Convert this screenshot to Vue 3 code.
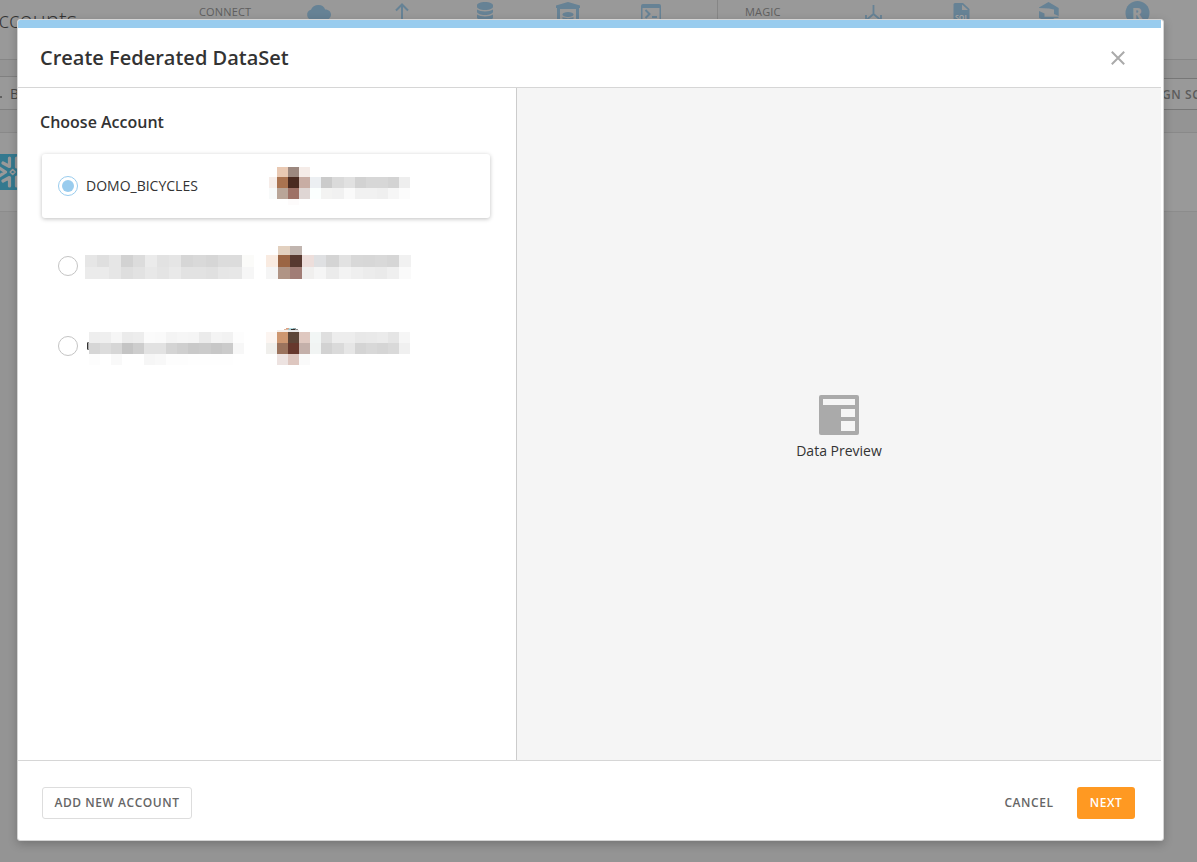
<script setup>
import { ref } from 'vue'

const wideCols = [277, 288, 299, 310, 321, 332, 344, 355, 366, 377, 388, 399, 410]

// Each band: top, bottom, column edges, one colour per column.
const accounts = [
  {
    id: 0,
    name: 'DOMO_BICYCLES',
    top: 154,
    nameBands: [],
    ownerBands: [
      [167, 177, [277, 288, 299, 310], 'e9c9b3 9c887f f5ece8'],
      [177, 188, [269, ...wideCols], 'f6ede9 aa7350 4a2a20 c8ada4 eceff2 cbcbcb dadada e1e1e1 d2d2d2 d7d7d7 d7d7d7 d3d3d3 eeeeee'],
      [188, 199, [269, ...wideCols], 'f8fafa b9a598 9e7166 dfd6d4 fbfffe f3f3f2 f1f1f1 fafafa f1f1f1 f1f1f1 efefef f6f6f6 fcfcfc'],
      [199, 205, [288, 299], 'fdfbfb'],
    ],
  },
  {
    id: 1,
    name: '',
    top: 234,
    nameBands: [
      [255, 267, [85, 97, 109, 121, 133, 145, 157, 169, 181, 193, 206, 218, 229, 242, 254], 'e6e6e6 dfdfdf e6e6e6 d2d2d2 dcdcdc ebebeb e2e2e2 e5e5e5 d6d6d6 d9d9d9 d6d6d6 dcdcdc dcdcdc fbfbf9'],
      [267, 279, [85, 97, 109, 121, 133, 145, 157, 169, 181, 193, 206, 218, 229, 242, 254], 'ebebeb ebebeb e6e6e6 dedede e2e2e2 e8e8e8 e4e4e4 e9e9e9 e2e2e2 e2e2e2 e0e0e0 e6e6e6 e7e7e7 f6f6f6'],
    ],
    ownerBands: [
      [246, 255, [278, 290, 302], 'e2d0bf c1b5af'],
      [255, 267, [266, 278, 290, 302, 314, 326, 339, 351, 363, 375, 387, 399, 411], 'f9ebe1 9b6544 573930 eddedb dfe0e2 d4d4d4 e2e2e2 d8d8d8 d7d7d7 d9d9d9 d6d6d6 f1f1f1'],
      [267, 279, [266, 278, 290, 302, 314, 326, 339, 351, 363, 375, 387, 399, 411], 'f5f5f5 b09485 a17d76 f0efee f5f5f5 ebebeb f3f3f3 efefef ececec eaeaea efefef fafafa'],
    ],
  },
  {
    id: 2,
    name: '',
    top: 314,
    nameBands: [
      [342, 343, [87, 89], '8a8a8a'],
      [343, 349, [87, 88, 89], '333333 a8a8a8'],
      [349, 350, [87, 89], '8a8a8a'],
      [332, 343, [89, 100, 111, 122, 133, 144, 155, 166, 177, 188, 199, 211, 222, 233, 244], 'eeeeee efefef f6f6f6 ebebeb ededed fbfbfb fafafa f4f4f4 f6f6f6 f5f5f5 ebebeb f4f4f4 f2f2f2 fdfdfd'],
      [343, 354, [89, 100, 111, 122, 133, 144, 155, 166, 177, 188, 199, 211, 222, 233, 244], 'd6d6d6 dcdcdc d6d6d6 c4c4c4 cdcdcd e2e2e2 e2e2e2 d4d4d4 cfcfcf c9c9c9 cbcbcb c7c7c7 cbcbcb f7f7f7'],
      [354, 365, [89, 100, 111, 122, 144, 155, 166, 188, 233], 'fdfdfd ffffff f9f9f9 ffffff f6f6f6 f8f8f8 fdfdfd fefefe'],
    ],
    ownerBands: [
      [328, 329, [286, 289, 293, 296], 'd9a184 b5dce3 8fa6a8'],
      [329, 330, [284, 288, 291, 295, 298], 'e0b59d 9ec9d0 34302e 8e8f8e'],
      [330, 332, [277, 288, 299], 'f5efec e9e7e7'],
      [332, 343, [266, ...wideCols], 'fcf5f1 ce9771 5d4538 dfc8c0 f2f6f5 dfdfdf ededed ededed e8e8e8 e9e9e9 ebebeb e5e5e5 f6f6f6'],
      [343, 354, [266, ...wideCols], 'f0efec 9b735d 67382d c4b0aa f1f4f3 d2d2d2 dadada e6e6e6 d4d4d4 d8d8d8 d5d5d5 d9d9d9 f0f0f0'],
      [354, 365, [277, 288, 299, 310], 'ede3e1 dec7c0 fafafa'],
    ],
  },
]

const cells = (bands) =>
  bands.flatMap(([y, bottom, xs, colours]) =>
    colours.split(' ').map((c, i) => ({ x: xs[i], y, w: xs[i + 1] - xs[i], h: bottom - y, fill: '#' + c }))
  )

const rows = accounts.map((a) => ({ ...a, nameCells: cells(a.nameBands), ownerCells: cells(a.ownerBands) }))
const selected = ref(0)
</script>

<template>
  <div class="screen">
    <div class="page">
      <header class="topbar">
        <h1>Accounts</h1>
        <span class="group">CONNECT</span>
        <div class="icons connect">
          <svg viewBox="0 0 28 28"><path d="M7 20a5.2 5.2 0 0 1-1-10.200C7 6.500 10 5 13.500 5c3.500 0 6 2 6.600 4.500C24 9.500 26 12 26 14.500S24 20 20 20z" /></svg>
          <svg viewBox="0 0 28 28"><path class="line" d="M14 22V5M8 10.500l6-6 6 6" /></svg>
          <svg viewBox="0 0 28 28"><path d="M6 5.200C6 3.400 9.600 2 14 2s8 1.400 8 3.200v1.500C22 8.500 18.400 10 14 10S6 8.500 6 6.700zM6 9.500c3.500 2.500 12.500 2.500 16 0v2.300C22 13.700 18.400 15 14 15s-8-1.300-8-3.200zM6 14.500c3.500 2.500 12.500 2.500 16 0v3c0 4-16 4-16 0z" /></svg>
          <svg viewBox="0 0 28 28"><path d="M2 5.500 14 2l12 3.500V8h-1v14h-3V9H6v13H3V8H2z" /><ellipse cx="14" cy="14.500" rx="5.500" ry="2.500" /><path d="M8.500 17c3 1.500 8 1.500 11 0V22h-11z" /></svg>
          <svg viewBox="0 0 28 28"><path fill-rule="evenodd" d="M6 4h16a2 2 0 0 1 2 2v16H4V6a2 2 0 0 1 2-2zm-.500 4v14h17V8z" /><path class="line" d="m8.500 10 4 4-4 4M15 17h5" /></svg>
        </div>
        <span class="divider"></span>
        <span class="group">MAGIC</span>
        <div class="icons magic">
          <svg viewBox="0 0 28 28"><path class="line thin" d="M14.500 5v9L8 19.500M14.500 14l6.500 5.500M7 15v5M22 15v5" /></svg>
          <svg viewBox="0 0 28 28"><path fill-rule="evenodd" d="M8 3h8l6.500 6v13H6.500V4.500A1.500 1.500 0 0 1 8 3zm7 1.500V10h6z" /><text x="8" y="20" class="sql">SQL</text></svg>
          <svg viewBox="0 0 28 28"><path d="M4 7.500 13.500 2l10.200 6v8L19 14V9.500L14 8.500 4 8zM4 11l5.500 2.500v3.200h14V18h-4l-5.500 4L4 18z" /></svg>
          <svg viewBox="0 0 28 28"><circle cx="14.500" cy="13" r="12" /><text x="9" y="18.500" class="r">R</text></svg>
        </div>
      </header>
      <div class="toolbar">
        <div class="field"><i></i><span>B</span></div>
        <div class="scope">GN SC</div>
      </div>
      <div class="listing">
        <svg class="flake" viewBox="0 0 36 36"><rect width="36" height="36" /><path d="M4 13l7.500 5L4 23M15.500 4v8.500L9 9M15.500 32v-8.500L9 27M22.500 4v9M22.500 32v-9" /><path d="m18.700 15.500 2.500 2.500-2.500 2.500-2.500-2.500z" class="core" /></svg>
      </div>
    </div>

    <section class="modal">
      <div class="accent"></div>
      <div class="head">
        <h2>Create Federated DataSet</h2>
        <svg class="close" viewBox="0 0 14 14"><path d="m.8.800 12.400 12.400M13.200.800.800 13.200" /></svg>
      </div>
      <div class="body">
        <div class="choose">
          <h3>Choose Account</h3>
          <div class="rows">
            <div v-for="row in rows" :key="row.id" class="row" :class="{ active: selected === row.id }" @click="selected = row.id">
              <span class="radio"></span>
              <span v-if="row.name" class="name">{{ row.name }}</span>
              <svg v-else class="mosaic" width="181" height="64" :viewBox="`85 ${row.top} 181 64`" shape-rendering="crispEdges">
                <rect v-for="(c, i) in row.nameCells" :key="i" :x="c.x" :y="c.y" :width="c.w" :height="c.h" :fill="c.fill" />
              </svg>
              <svg class="mosaic" width="160" height="64" :viewBox="`266 ${row.top} 160 64`" shape-rendering="crispEdges">
                <rect v-for="(c, i) in row.ownerCells" :key="i" :x="c.x" :y="c.y" :width="c.w" :height="c.h" :fill="c.fill" />
              </svg>
            </div>
          </div>
        </div>
        <div class="preview">
          <svg width="40" height="40" viewBox="0 0 40 40"><rect width="40" height="40" rx="2" fill="#aaa" /><path fill="#f5f5f5" d="M4 4h32v6H4zM22 14h14v8H22zM22 26h14v10H22z" /></svg>
          <p>Data Preview</p>
        </div>
      </div>
      <footer class="foot">
        <button class="add">ADD NEW ACCOUNT</button>
        <button class="cancel">CANCEL</button>
        <button class="next">NEXT</button>
      </footer>
    </section>
  </div>
</template>

<style>
body { background: #949494; overflow: hidden; }
</style>

<style scoped>
* { box-sizing: border-box; }
.screen {
  position: relative;
  width: 1197px;
  height: 862px;
  overflow: hidden;
  font-family: "Open Sans", "Noto Sans", sans-serif;
  color: #333;
}
.page { position: absolute; inset: 0; background: #949494; }
.topbar {
  display: grid;
  grid-template-columns: 199px 106px 412px 28px 114px 1fr;
  height: 60px;
  background: #999;
  border-bottom: 1px solid #868686;
}
h1 { margin: 3px 0 0 -15px; font-size: 22px; line-height: 32px; font-weight: 300; letter-spacing: 0.2px; color: #333; }
.group { font-size: 11px; line-height: 24px; font-weight: 500; letter-spacing: 0.15px; color: #5e5e5e; }
.icons { display: flex; height: 28px; }
.icons svg { flex: none; width: 28px; height: 28px; fill: #668295; }
.connect { gap: 55px; }
.magic { gap: 60px; }
.icons .line { fill: none; stroke: #668295; stroke-width: 2; }
.icons .thin { stroke-width: 1.8; }
.icons .sql { font: 700 7px "Open Sans", sans-serif; fill: #a4a4a4; }
.icons .r { font: 800 15px "Open Sans", sans-serif; fill: #999; }
.divider { width: 1px; height: 59px; background: #868686; }
.toolbar { display: flex; justify-content: space-between; height: 73px; border-bottom: 1px solid #898989; }
.field {
  display: flex;
  align-items: center;
  width: 180px;
  height: 34px;
  margin-top: 16px;
  background: #999;
  border: 1px solid #808080;
  border-left: 0;
  font-size: 14px;
  color: #484848;
}
.field i { width: 2px; height: 2px; margin: 7px 8px 0 0; background: #606060; }
.scope {
  width: 35px;
  height: 32px;
  margin-top: 18px;
  background: #999;
  border: 1px solid #777;
  border-width: 1px 0;
  font-size: 12px;
  font-weight: 600;
  line-height: 31px;
  letter-spacing: 0.6px;
  white-space: nowrap;
  color: #5c5c5c;
}
.listing { height: 79px; padding-top: 21px; background: #999; border-bottom: 1px solid #8c8c8c; }
.flake { display: block; width: 36px; height: 36px; margin-left: -6px; }
.flake rect { fill: #34798f; }
.flake path { fill: none; stroke: #999; stroke-width: 3.2; stroke-linecap: round; stroke-linejoin: round; }
.flake .core { stroke-width: 1.6; }

.modal {
  position: absolute;
  left: 17px;
  top: 19px;
  width: 1147px;
  height: 822px;
  display: flex;
  flex-direction: column;
  padding-right: 2px;
  background: #fff;
  border: 1px solid #d4d4d4;
  border-radius: 3px;
  box-shadow: 0 3px 10px rgba(0, 0, 0, 0.22);
}
.accent { flex: none; height: 8px; background: #99ccee; border-radius: 2px 0 0 0; }
.head {
  display: flex;
  flex: none;
  align-items: center;
  justify-content: space-between;
  height: 60px;
  padding: 0 36.5px 0 22px;
  border-bottom: 1px solid #d6d6d6;
}
h2 { margin: 0; font-size: 20px; line-height: 28px; font-weight: 600; }
.close { width: 14px; height: 14px; margin-top: 1px; fill: none; stroke: #aaa; stroke-width: 2; }
.body { display: flex; flex: 1; }
.choose { width: 499px; padding-left: 22px; border-right: 1px solid #ccc; }
h3 { margin: 22px 0 20px; font-size: 16px; line-height: 24px; font-weight: 600; }
.rows { display: flex; flex-direction: column; gap: 16px; padding-left: 2px; }
.row { display: flex; align-items: center; width: 448px; height: 64px; padding-left: 16px; border-radius: 3px; }
.row.active { box-shadow: 0 1px 4px rgba(0, 0, 0, 0.25); }
.radio { display: flex; flex: none; width: 20px; height: 20px; margin-right: 7px; border: 1px solid #c4c4c4; border-radius: 50%; }
.active .radio { border-color: #99ccee; }
.active .radio::after { content: ""; width: 12px; height: 12px; margin: 3px; border-radius: 50%; background: #99ccee; }
.name { width: 181px; padding-left: 1px; font-size: 14px; line-height: 20px; }
.mosaic { flex: none; display: block; }
.preview { display: flex; flex: 1; flex-direction: column; align-items: center; padding-top: 307px; background: #f5f5f5; }
.preview p { margin: 6px 0 0; font-size: 14px; line-height: 20px; }
.foot { display: flex; flex: none; height: 80px; padding: 26px 26px 0 24px; border-top: 1px solid #d6d6d6; }
button {
  height: 32px;
  padding: 0 0 2px;
  border: 0;
  border-radius: 3px;
  background: none;
  font: 600 12px "Open Sans", "Noto Sans", sans-serif;
  letter-spacing: 0.55px;
  color: #666;
}
.add { width: 150px; border: 1px solid #ddd; }
.cancel { width: 72px; margin-left: auto; margin-right: 12px; }
.next { width: 58px; background: #ff9922; color: #fff; }
</style>
